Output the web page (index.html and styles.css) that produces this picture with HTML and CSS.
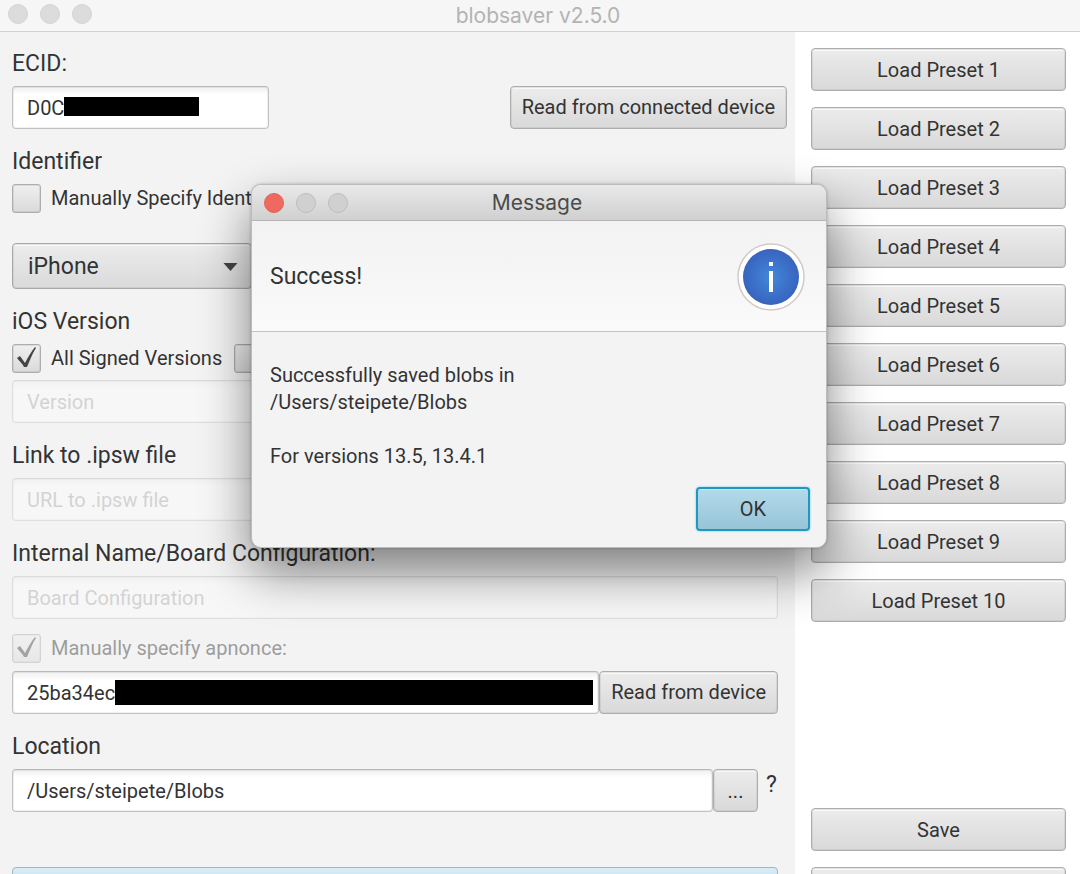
FILE: index.html
```html
<!DOCTYPE html>
<html lang="en">
<head>
<meta charset="utf-8">
<title>blobsaver v2.5.0</title>
<link rel="stylesheet" href="styles.css">
</head>
<body>
<div class="window">
  <header class="titlebar">
    <div class="lights"><span class="light"></span><span class="light"></span><span class="light"></span></div>
    <h1 class="title">blobsaver v2.5.0</h1>
  </header>
  <div class="panes">
    <main class="form">
      <label class="heading" for="ecid">ECID:</label>
      <div class="row ecid-row">
        <div class="masked ecid-field">
          <input class="field" id="ecid" type="text" value="D0C">
          <span class="mask mask-ecid"></span>
        </div>
        <button class="button read" type="button">Read from connected device</button>
      </div>

      <h2 class="heading">Identifier</h2>
      <div class="row identifier-row">
        <label class="check"><span class="box"><input type="checkbox"></span>Manually Specify Identifier</label>
        <input class="field identifier-field" type="text" aria-label="Identifier" disabled>
      </div>
      <div class="combo">
        <select class="select" aria-label="Device type"><option>iPhone</option></select>
        <svg class="arrow" viewBox="0 0 14 8"><path d="M0 0h14L7 8z"/></svg>
      </div>

      <h2 class="heading">iOS Version</h2>
      <div class="row checks">
        <label class="check"><span class="box"><input type="checkbox" checked><svg class="tick" viewBox="0 0 28 28"><path d="M5 14l3-2 5 7c3-6 6-11 10-16l1 1c-4 6-6 12-9 19h-3c-1-3-4-5-7-9z"/></svg></span>All Signed Versions</label>
        <span class="box"><input type="checkbox" aria-label="Beta versions"></span>
      </div>
      <input class="field" type="text" placeholder="Version" aria-label="Version" disabled>

      <label class="heading" for="ipsw">Link to .ipsw file</label>
      <input class="field" id="ipsw" type="text" placeholder="URL to .ipsw file" disabled>

      <label class="heading" for="board">Internal Name/Board Configuration:</label>
      <input class="field" id="board" type="text" placeholder="Board Configuration" disabled>

      <div class="row apnonce-check">
        <label class="check check-off"><span class="box"><input type="checkbox" checked disabled><svg class="tick" viewBox="0 0 28 28"><path d="M5 14l3-2 5 7c3-6 6-11 10-16l1 1c-4 6-6 12-9 19h-3c-1-3-4-5-7-9z"/></svg></span>Manually specify apnonce:</label>
      </div>
      <div class="row joined">
        <div class="masked grow">
          <input class="field" type="text" value="25ba34ec" aria-label="apnonce">
          <span class="mask mask-apnonce"></span>
        </div>
        <button class="button read" type="button">Read from device</button>
      </div>

      <label class="heading" for="location">Location</label>
      <div class="row joined">
        <input class="field grow" id="location" type="text" value="/Users/steipete/Blobs">
        <button class="button browse" type="button">...</button>
        <span class="help">?</span>
      </div>
      <button class="button go" type="button" aria-label="Go"></button>
    </main>

    <aside class="presets">
      <button class="button" type="button">Load Preset 1</button>
      <button class="button" type="button">Load Preset 2</button>
      <button class="button" type="button">Load Preset 3</button>
      <button class="button" type="button">Load Preset 4</button>
      <button class="button" type="button">Load Preset 5</button>
      <button class="button" type="button">Load Preset 6</button>
      <button class="button" type="button">Load Preset 7</button>
      <button class="button" type="button">Load Preset 8</button>
      <button class="button" type="button">Load Preset 9</button>
      <button class="button" type="button">Load Preset 10</button>
      <button class="button save" type="button">Save</button>
      <button class="button" type="button" aria-label="More"></button>
    </aside>
  </div>
</div>

<section class="dialog" role="dialog" aria-labelledby="dialog-title">
  <header class="dialog-bar">
    <div class="lights"><span class="light close"></span><span class="light"></span><span class="light"></span></div>
    <h2 class="title" id="dialog-title">Message</h2>
  </header>
  <div class="dialog-head">
    <p class="dialog-heading">Success!</p>
    <svg class="info" viewBox="0 0 68 68">
      <defs><radialGradient id="blue"><stop offset="0" stop-color="#4387db"/><stop offset="1" stop-color="#3864be"/></radialGradient></defs>
      <circle cx="34" cy="34" r="33" fill="#fff" stroke="#d3cac8" stroke-width="1.5"/>
      <circle cx="34" cy="34" r="28" fill="url(#blue)"/>
      <path fill="#fff" d="M32 19h4v4h-4zM32 28h4v21h-4z"/>
    </svg>
  </div>
  <div class="dialog-body">
    <p>Successfully saved blobs in<br>/Users/steipete/Blobs</p>
    <p>For versions 13.5, 13.4.1</p>
    <button class="button ok" type="button">OK</button>
  </div>
</section>
</body>
</html>
```
FILE: styles.css
```css
* { box-sizing: border-box; }

body {
  margin: 0;
  overflow: hidden;
  font-family: Roboto, "Liberation Sans", sans-serif;
  font-size: 20px;
  line-height: 27px;
  color: #333;
}

h1, h2, p { margin: 0; }

.window {
  height: 100vh;
  display: flex;
  flex-direction: column;
  overflow: hidden;
  background: #f3f3f3;
}

.titlebar, .dialog-bar {
  position: relative;
  flex: none;
  display: flex;
  align-items: center;
  justify-content: center;
}

.titlebar {
  height: 32px;
  background: #f6f6f6;
  border-bottom: 1px solid #d2d2d2;
  color: #b3b3b3;
}

.title {
  padding-right: 4px;
  font-family: Inter, sans-serif;
  font-size: 21px;
  font-weight: 400;
}

.lights {
  position: absolute;
  left: 8px;
  top: 4px;
  display: flex;
  gap: 12px;
}

.light {
  width: 20px;
  height: 20px;
  border-radius: 50%;
  background: #dcdcdc;
  border: 1px solid #d3d3d3;
}

.panes { flex: 1; display: flex; min-height: 0; }

.form {
  flex: 1;
  display: flex;
  flex-direction: column;
  min-width: 0;
  padding: 18px 17px 0 12px;
}

.form > * { flex: none; }

.heading {
  margin: 19px 0 9px;
  font-size: 23px;
  font-weight: 400;
  line-height: 27px;
}

.heading:first-child { margin-top: 0; }

.row { display: flex; align-items: flex-start; }

.ecid-row { justify-content: space-between; margin-right: -9px; }
.ecid-field { width: 257px; }

.field {
  width: 100%;
  height: 43px;
  padding: 0 14px;
  border: 1px solid #c2c2c2;
  border-top-color: #b8b8b8;
  border-radius: 4px;
  background: linear-gradient(#f0f0f0, #fff 8px);
  box-shadow: inset 0 0 0 1px rgba(0, 0, 0, .06);
  color: #333;
  font: inherit;
}

.field:disabled { opacity: .4; }
.field::placeholder { color: #a4a4a4; opacity: 1; }

.masked { position: relative; display: flex; }
.mask { position: absolute; background: #000; }
.mask-ecid { left: 52px; top: 11px; width: 135px; height: 19px; }
.mask-apnonce { left: 103px; right: 6px; top: 9px; height: 25px; }

.button {
  height: 43px;
  flex: none;
  padding: 1px 13px 0;
  border: 1px solid #adadad;
  border-radius: 4px;
  background: linear-gradient(#ececec, #d9d9d9);
  box-shadow: inset 0 0 0 1px rgba(160, 160, 160, .22), inset 0 2px 0 #f8f8f8;
  color: #333;
  font: inherit;
}

.read { padding: 0 11px; }

.check { display: flex; align-items: center; gap: 10px; white-space: nowrap; }

.box { display: grid; width: 29px; height: 29px; }

.box input {
  appearance: none;
  grid-area: 1 / 1;
  margin: 0;
  border: 1px solid #adadad;
  border-radius: 3px;
  background: linear-gradient(#efefef, #dadada);
  box-shadow: inset 0 0 0 1px rgba(160, 160, 160, .25);
}

.tick { grid-area: 1 / 1; z-index: 1; width: 28px; height: 28px; fill: #444; }

.check-off { opacity: .45; }

.identifier-row { gap: 8px; height: 59px; }
.identifier-field { width: 256px; }

.combo { position: relative; width: 240px; }

.select {
  appearance: none;
  display: block;
  width: 100%;
  height: 46px;
  padding: 0 15px;
  border: 1px solid #a8a8a8;
  border-radius: 4px;
  background: linear-gradient(#ececec, #dadada);
  box-shadow: inset 0 0 0 1px rgba(160, 160, 160, .22), inset 0 2px 0 #f8f8f8;
  color: #333;
  font: inherit;
  font-size: 23px;
}

.arrow { position: absolute; right: 14px; top: 20px; width: 15px; height: 8px; fill: #444; }

.checks { gap: 12px; margin-bottom: 7px; }
.apnonce-check { margin: 15px 0 8px; }

.grow { flex: 1; }
.browse { width: 45px; }
.help { width: 20px; padding: 2px 0 0 8px; font-size: 23px; }

.go { margin-top: 55px; background: linear-gradient(#d8ecf6, #a8cfe2); border-color: #9fb8c4; box-shadow: none; }

.presets {
  width: 285px;
  flex: none;
  display: flex;
  flex-direction: column;
  gap: 16px;
  padding: 16px 14px 0 16px;
  background: #fff;
}

.save { margin-top: 170px; }

.dialog {
  position: absolute;
  left: 251px;
  top: 184px;
  width: 576px;
  overflow: hidden;
  border: 1px solid #bcbcbc;
  border-radius: 10px;
  background: #f3f3f3;
  box-shadow: 0 24px 50px rgba(0, 0, 0, .48), 0 0 3px rgba(0, 0, 0, .25);
}

.dialog-bar {
  height: 36px;
  background: linear-gradient(#e9e9e9, #d0d0d0);
  border-bottom: 1px solid #b5b5b5;
  color: #4b4b4b;
}

.dialog-bar .lights { left: 12px; top: 8px; }
.dialog-bar .light { background: #d0d0d0; border-color: #bdbdbd; }
.dialog-bar .close { background: #ee695f; border-color: #e4635a; }

.dialog-head {
  display: flex;
  align-items: center;
  justify-content: space-between;
  height: 111px;
  padding: 1px 21px 0 18px;
  background: linear-gradient(#f2f2f2, #fafafa);
  border-bottom: 1px solid #c2c2c2;
}

.dialog-heading { font-size: 23px; }
.info { width: 68px; height: 68px; }

.dialog-body {
  display: flex;
  flex-direction: column;
  gap: 27px;
  padding: 30px 16px 16px 18px;
}

.ok {
  align-self: flex-end;
  width: 114px;
  height: 44px;
  margin-top: -10px;
  border: 2px solid #2196be;
  background: linear-gradient(#b2daea, #98c4d8);
  box-shadow: 0 0 2px #4cc3ea, inset 0 1px 0 #c9e6f2;
}
```
